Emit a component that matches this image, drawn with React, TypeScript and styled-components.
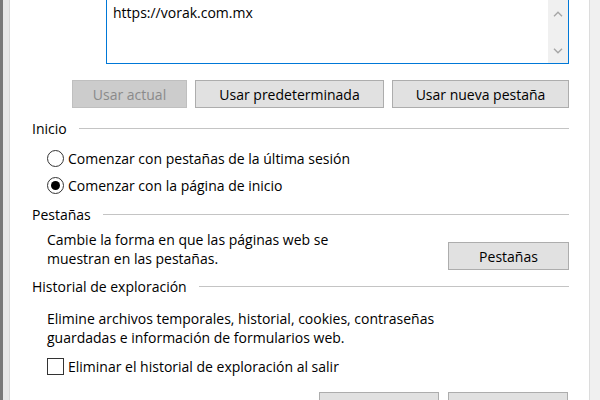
import React from 'react'
import styled, { createGlobalStyle } from 'styled-components'

const GlobalStyle = createGlobalStyle`
  html, body {
    margin: 0;
    padding: 0;
    background: #ffffff;
    overflow: hidden;
  }
  body {
    font-family: "Open Sans", "Noto Sans", sans-serif;
    font-size: 14px;
    color: #000;
  }
`

const Window = styled.div`
  display: flex;
  width: 600px;
  height: 400px;
  overflow: hidden;
`

const LeftFrame = styled.div`
  width: 6px;
  flex-shrink: 0;
  background: #e6e6e6;
  border-left: 3px solid #777777;
  border-right: 1px solid #d6d6d6;
`

const RightStrip = styled.div`
  width: 10px;
  flex-shrink: 0;
  background: #f0f0f0;
  border-left: 1px solid #dcdcdc;
`

const Page = styled.div`
  flex: 1;
  display: flex;
  flex-direction: column;
  padding: 0 20px 0 22px;
  background: #fff;
`

const UrlBox = styled.div`
  margin-left: 74px;
  height: 63px;
  flex-shrink: 0;
  display: flex;
  border: 1px solid #0078d7;
  border-top: none;
`

const UrlText = styled.div`
  flex: 1;
  padding: 3px 6px;
  line-height: 19px;
`

const ScrollTrack = styled.div`
  width: 20px;
  background: #f0f0f0;
  display: flex;
  flex-direction: column;
  justify-content: space-between;
  align-items: center;
  padding: 11px 0 9px;
`

const ButtonRow = styled.div`
  display: flex;
  justify-content: flex-end;
  gap: 8px;
  margin-top: 16px;
`

const Button = styled.div<{ $width: number; $disabled?: boolean }>`
  width: ${(p) => p.$width}px;
  height: 28px;
  box-sizing: border-box;
  display: flex;
  align-items: center;
  justify-content: center;
  background: ${(p) => (p.$disabled ? '#cccccc' : '#e1e1e1')};
  border: 1px solid ${(p) => (p.$disabled ? '#bfbfbf' : '#adadad')};
  color: ${(p) => (p.$disabled ? '#8a8a8a' : '#000')};
  flex-shrink: 0;
`

const SectionHeading = styled.div<{ $top: number }>`
  display: flex;
  align-items: center;
  gap: 12px;
  height: 20px;
  flex-shrink: 0;
  margin-top: ${(p) => p.$top}px;

  &::after {
    content: '';
    flex: 1;
    height: 1px;
    background: #c4c4c4;
  }
`

const OptionGroup = styled.div<{ $top: number }>`
  display: flex;
  flex-direction: column;
  margin-top: ${(p) => p.$top}px;
`

const OptionRow = styled.label`
  display: flex;
  align-items: center;
  gap: 4px;
  height: 27px;
  flex-shrink: 0;
  padding-left: 15px;
`

const Radio = styled.span<{ $checked?: boolean }>`
  width: 17px;
  height: 17px;
  box-sizing: border-box;
  border: 1px solid #333;
  border-radius: 50%;
  display: flex;
  align-items: center;
  justify-content: center;

  &::after {
    content: '';
    width: 9px;
    height: 9px;
    border-radius: 50%;
    background: ${(p) => (p.$checked ? '#000' : 'transparent')};
  }
`

const Checkbox = styled.span`
  width: 17px;
  height: 17px;
  box-sizing: border-box;
  border: 1px solid #333;
  background: #fff;
`

const DescRow = styled.div<{ $top: number }>`
  display: flex;
  justify-content: space-between;
  align-items: flex-start;
  flex-shrink: 0;
  margin-top: ${(p) => p.$top}px;
  padding-left: 15px;
`

const Desc = styled.p`
  margin: 0;
  line-height: 19px;
`

const SideButton = styled(Button)`
  margin-top: 12px;
`

const Footer = styled.div`
  display: flex;
  justify-content: flex-end;
  gap: 9px;
  margin-top: 12px;
  padding-right: 1px;
`

const Chevron = ({ up }: { up?: boolean }) => (
  <svg width="10" height="6" viewBox="0 0 10 6">
    <path
      d={up ? 'M1 5.2 L5 1.2 L9 5.2' : 'M1 0.8 L5 4.8 L9 0.8'}
      fill="none"
      stroke="#a6a6a6"
      strokeWidth="1.4"
    />
  </svg>
)

export default function App() {
  return (
    <>
      <GlobalStyle />
      <Window>
        <LeftFrame />
        <Page>
          <UrlBox>
            <UrlText>https://vorak.com.mx</UrlText>
            <ScrollTrack>
              <Chevron up />
              <Chevron />
            </ScrollTrack>
          </UrlBox>

          <ButtonRow>
            <Button $width={115} $disabled>
              Usar actual
            </Button>
            <Button $width={189}>Usar predeterminada</Button>
            <Button $width={177}>Usar nueva pestaña</Button>
          </ButtonRow>

          <SectionHeading $top={10}>Inicio</SectionHeading>
          <OptionGroup $top={7}>
            <OptionRow>
              <Radio />
              Comenzar con pestañas de la última sesión
            </OptionRow>
            <OptionRow>
              <Radio $checked />
              Comenzar con la página de inicio
            </OptionRow>
          </OptionGroup>

          <SectionHeading $top={5}>Pestañas</SectionHeading>
          <DescRow $top={6}>
            <Desc>
              Cambie la forma en que las páginas web se
              <br />
              muestran en las pestañas.
            </Desc>
            <SideButton $width={121}>Pestañas</SideButton>
          </DescRow>

          <SectionHeading $top={6}>Historial de exploración</SectionHeading>
          <DescRow $top={13}>
            <Desc>
              Elimine archivos temporales, historial, cookies, contraseñas
              <br />
              guardadas e información de formularios web.
            </Desc>
          </DescRow>
          <OptionGroup $top={6}>
            <OptionRow>
              <Checkbox />
              Eliminar el historial de exploración al salir
            </OptionRow>
          </OptionGroup>

          <Footer>
            <Button $width={120} />
            <Button $width={120} />
          </Footer>
        </Page>
        <RightStrip />
      </Window>
    </>
  )
}
